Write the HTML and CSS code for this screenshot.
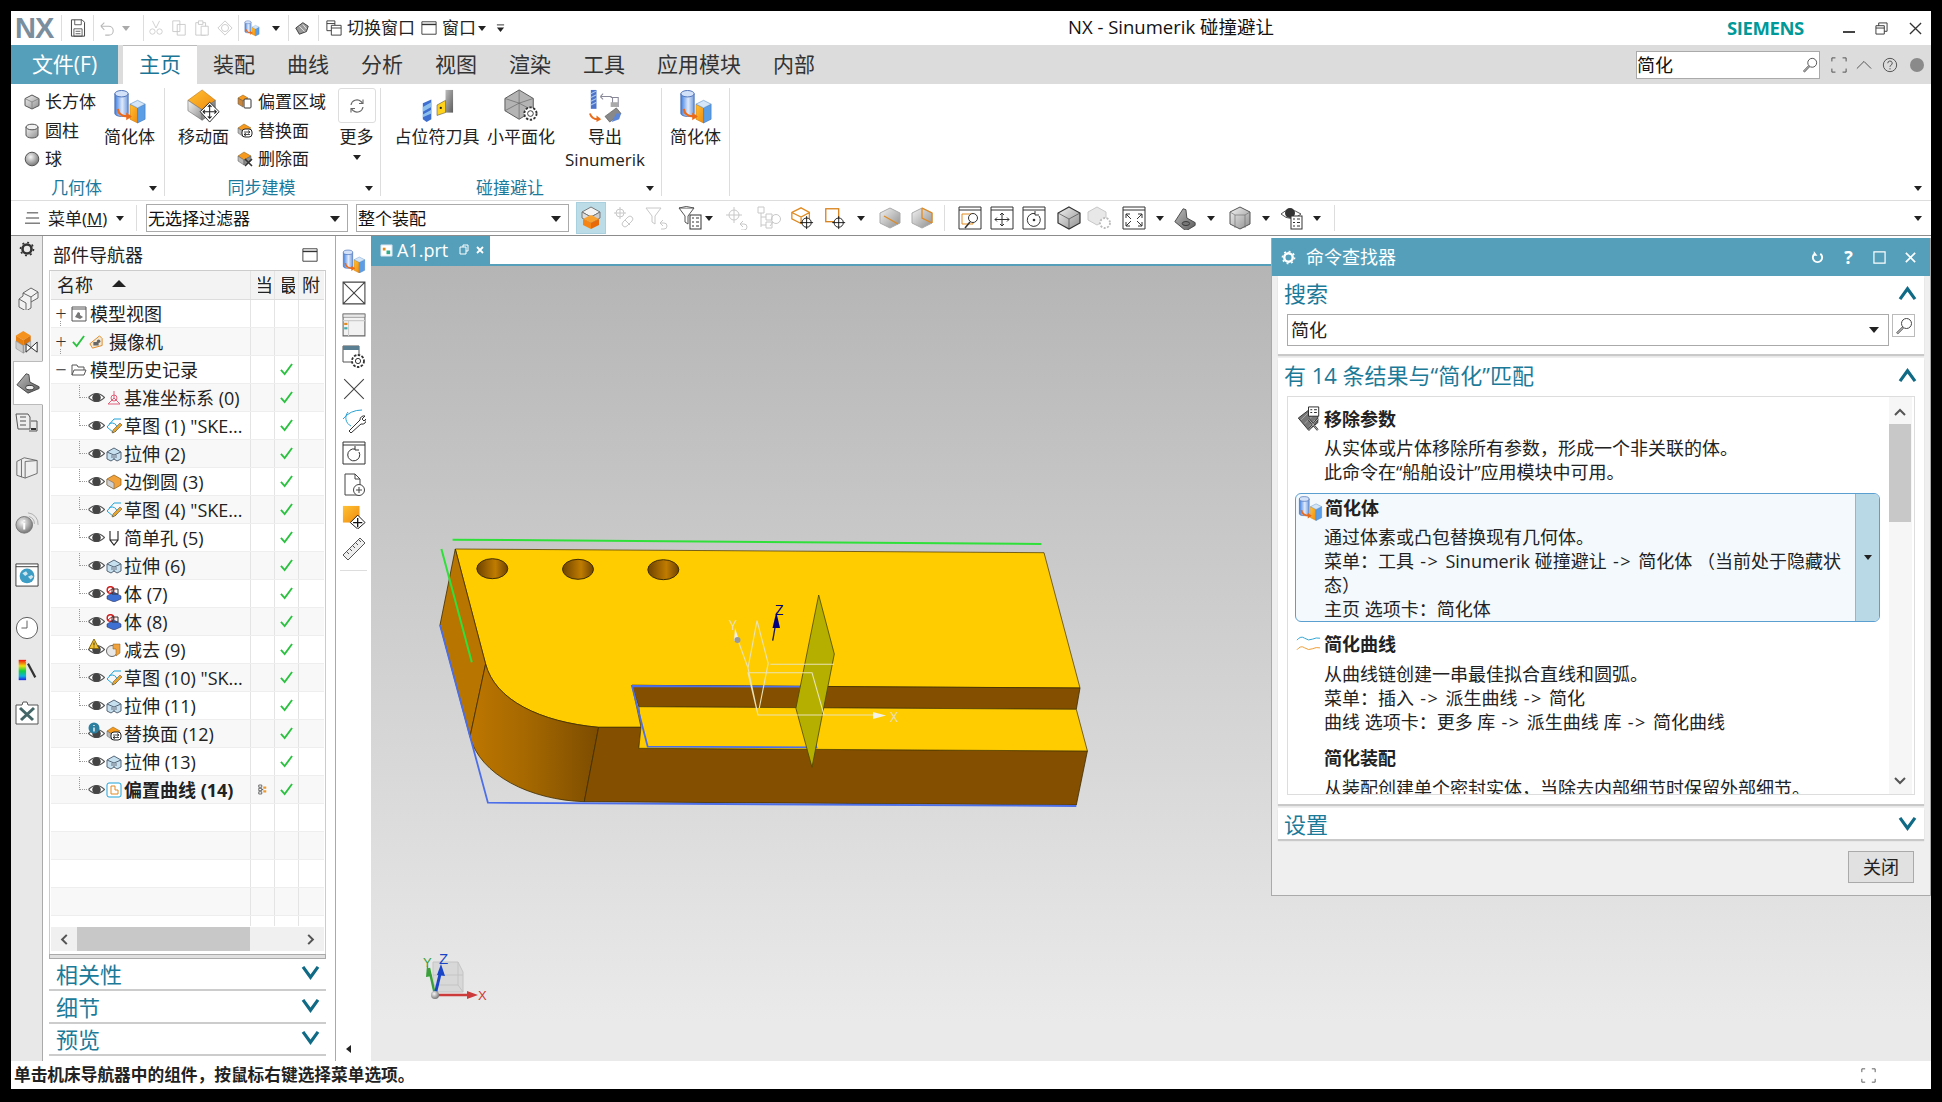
FILE: index.html
```html
<!DOCTYPE html>
<html lang="zh">
<head>
<meta charset="utf-8">
<title>NX - Sinumerik 碰撞避让</title>
<link rel="stylesheet" href="styles.css">
</head>
<body>
<svg class="sprite" xmlns="http://www.w3.org/2000/svg">
<defs>
<linearGradient id="gBlue" x1="0" x2="1" y1="0" y2="0"><stop offset="0" stop-color="#3f7fe0"/><stop offset=".55" stop-color="#dfeafb"/><stop offset="1" stop-color="#6f9be0"/></linearGradient>
<linearGradient id="gOrange" x1="0" x2="1" y1="0" y2="1"><stop offset="0" stop-color="#ffc233"/><stop offset="1" stop-color="#f08a10"/></linearGradient>
<linearGradient id="gGray" x1="0" x2="1" y1="0" y2="1"><stop offset="0" stop-color="#f4f4f4"/><stop offset="1" stop-color="#8e8e8e"/></linearGradient>
<linearGradient id="gDark" x1="0" x2="1" y1="0" y2="1"><stop offset="0" stop-color="#bdbdbd"/><stop offset="1" stop-color="#5c5c5c"/></linearGradient>
<radialGradient id="gBall" cx=".4" cy=".35" r=".7"><stop offset="0" stop-color="#f6f6f6"/><stop offset="1" stop-color="#707070"/></radialGradient>
<linearGradient id="gHole" x1="0" x2="1" y1="0" y2="0"><stop offset="0" stop-color="#6e4300"/><stop offset=".6" stop-color="#c07c00"/><stop offset="1" stop-color="#6e4300"/></linearGradient>
<linearGradient id="gRound" x1="0" x2="1" y1="0" y2="0"><stop offset="0" stop-color="#bd7600"/><stop offset=".45" stop-color="#a56800"/><stop offset="1" stop-color="#7c4c00"/></linearGradient>
<linearGradient id="gRainbow" x1="0" x2="0" y1="0" y2="1"><stop offset="0" stop-color="#f01010"/><stop offset=".3" stop-color="#f0e010"/><stop offset=".55" stop-color="#10d040"/><stop offset=".8" stop-color="#10b0e0"/><stop offset="1" stop-color="#2020e0"/></linearGradient>

<symbol id="simp" viewBox="0 0 36 36">
<path d="M2 5v21a7 3 0 0 0 14 0V5z" fill="url(#gBlue)" stroke="#4a6fb5"/>
<ellipse cx="9" cy="5" rx="7" ry="3.4" fill="#d3e2f8" stroke="#4a6fb5"/>
<path d="M18 16l8 4v16l-8-4z" fill="url(#gOrange)" stroke="#c87a10" stroke-width=".6"/>
<path d="M26 20l8-4v16l-8 4z" fill="#5b9ee6" stroke="#3a72b8" stroke-width=".6"/>
<path d="M18 16l8-4 8 4-8 4z" fill="#d4e6f7" stroke="#5b8fc8" stroke-width=".6"/>
<path d="M5 21q1 8 11 8" fill="none" stroke="#ea6a1a" stroke-width="2.4"/>
<path d="M14 25l6 4-6 4z" fill="#ea6a1a"/>
</symbol>
<symbol id="cube" viewBox="0 0 16 16"><path d="M8 1l7 3.6v7L8 15l-7-3.4v-7z" fill="url(#gGray)" stroke="#555"/><path d="M1 4.6L8 8l7-3.4M8 8v7" fill="none" stroke="#777" stroke-width=".7"/></symbol>
<symbol id="cyl" viewBox="0 0 16 16"><path d="M2 4v8a6 3 0 0 0 12 0V4z" fill="url(#gGray)" stroke="#555"/><ellipse cx="8" cy="4" rx="6" ry="2.8" fill="#f1f1f1" stroke="#555"/></symbol>
<symbol id="ball" viewBox="0 0 16 16"><circle cx="8" cy="8" r="6.8" fill="url(#gBall)" stroke="#555"/></symbol>
<symbol id="move" viewBox="0 0 36 36">
<path d="M1 12L16 1l14 11-14 10z" fill="url(#gOrange)" stroke="#c06f10" stroke-width=".6"/>
<path d="M1 12v11l15 10V22z" fill="url(#gGray)" stroke="#666" stroke-width=".6"/>
<path d="M30 12v11L16 33V22z" fill="url(#gDark)" stroke="#666" stroke-width=".6"/>
<path d="M24 14l10 10-10 11-10-11z" fill="#fff" stroke="#222"/>
<path d="M24 17v14M17 24h14M22 19l2-2 2 2M22 29l2 2 2-2M19 22l-2 2 2 2M29 22l2 2-2 2" fill="none" stroke="#222" stroke-width="1.1"/>
</symbol>
<symbol id="offset" viewBox="0 0 16 16"><path d="M1 4l5-3 5 3-5 3z" fill="#f59a1e" stroke="#8a5a10" stroke-width=".5"/><path d="M1 4v6l5 3V7z" fill="#c9863a" stroke="#555" stroke-width=".5"/><rect x="7" y="5" width="7" height="9" rx="1" fill="#fff" stroke="#333"/></symbol>
<symbol id="replace" viewBox="0 0 16 16"><path d="M1 5l6-4 7 4-7 4z" fill="#f59a1e" stroke="#8a5a10" stroke-width=".5"/><path d="M1 5v5l6 4V9z" fill="#bbb" stroke="#555" stroke-width=".5"/><rect x="5" y="6" width="10" height="8" rx="3" fill="#fff" stroke="#222"/><path d="M7 9h6M11 7.500l2 1.500-2 1.500M13 11.500H7M9 10l-2 1.500 2 1.500" fill="none" stroke="#222" stroke-width=".8"/></symbol>
<symbol id="delface" viewBox="0 0 16 16"><path d="M1 5l6-4 7 4-7 4z" fill="#f59a1e" stroke="#8a5a10" stroke-width=".5"/><path d="M1 5v5l6 4V9z" fill="#bbb" stroke="#555" stroke-width=".5"/><path d="M14 5v5l-7 4V9z" fill="#8d8d8d" stroke="#555" stroke-width=".5"/><path d="M8 8l7 7M15 8l-7 7" stroke="#333" stroke-width="1.6"/></symbol>
<symbol id="refresh" viewBox="0 0 18 18"><path d="M3 8a6 6 0 0 1 10-3.500l1.500 1.500M15 10a6 6 0 0 1-10 3.500L3.500 12" fill="none" stroke="#666" stroke-width="1.1"/><path d="M15 2.500V6.500h-4M3 15.500V11.500h4" fill="none" stroke="#666" stroke-width="1.1"/></symbol>
<symbol id="tool" viewBox="0 0 36 36">
<path d="M3 15l9-4v21l-5 3-4-3z" fill="#3d6ed0"/><path d="M3 19l9-5v5l-9 5zM3 27l9-5v4l-9 4z" fill="#8ec0ee"/>
<rect x="27" y="1" width="8" height="24" fill="url(#gDark)"/><path d="M18 17l9-5v13l-9 3z" fill="#ffd21c" stroke="#333" stroke-width=".5"/><circle cx="22" cy="20" r="1.2" fill="#222"/>
</symbol>
<symbol id="facet" viewBox="0 0 36 36">
<path d="M1 10L16 1l15 9v13l-15 9-15-9z" fill="#b4b4b4" stroke="#555"/><path d="M16 1v14L1 10M16 15l15-5M16 15v17M16 15L1 23M16 15l15 8" fill="none" stroke="#666" stroke-width=".7"/>
<circle cx="28" cy="26" r="6.500" fill="#fff" stroke="#333" stroke-width="2" stroke-dasharray="2.500 1.600"/><circle cx="28" cy="26" r="3" fill="#fff" stroke="#333"/>
</symbol>
<symbol id="export" viewBox="0 0 36 36">
<path d="M3 1h6v20H3z" fill="#4d73c9"/><path d="M3 5l6-3M3 9l6-3M3 13l6-3M3 17l6-3" stroke="#a9c8ef" stroke-width="1.1"/>
<path d="M13 8h12M13 8l3-3M13 8l3 3M24 9h8v10M26 9v10" fill="none" stroke="#889" stroke-width="1.1"/><rect x="24" y="14" width="8" height="5" fill="#aaa"/>
<path d="M18 29l12-9 5 6-12 9z" fill="#888" stroke="#444" stroke-width=".6"/><path d="M30 26l5 0-2 6-8 3z" fill="#5b86d8"/>
<path d="M2 26q2 6 8 6" fill="none" stroke="#ea6a1a" stroke-width="2"/><path d="M9 28l5 4-5 3z" fill="#ea6a1a"/>
</symbol>
<symbol id="save" viewBox="0 0 18 22"><path d="M1 1h13l3 3v17H1z" fill="#fff" stroke="#444" stroke-width="1.2"/><path d="M5 1v6h8V1M4 12h10v9H4zM6 15h6M6 18h6" fill="none" stroke="#444"/></symbol>
<symbol id="undo" viewBox="0 0 18 18"><path d="M2 7h9a5 5 0 0 1 0 10H7M2 7l4-4M2 7l4 4" fill="none" stroke="#b8b8b8" stroke-width="1.2"/></symbol>
<symbol id="cut" viewBox="0 0 18 18"><path d="M9 9L5 1M9 9l4-8" stroke="#ccc" fill="none"/><circle cx="5" cy="13" r="3" fill="none" stroke="#ccc"/><circle cx="13" cy="13" r="3" fill="none" stroke="#ccc"/></symbol>
<symbol id="copy" viewBox="0 0 18 18"><path d="M2 1h8v12H2zM7 5h9v12H7z" fill="#fff" stroke="#c8c8c8"/></symbol>
<symbol id="paste" viewBox="0 0 18 18"><path d="M2 3h11v14H2z" fill="#fff" stroke="#c8c8c8"/><path d="M5 1h5v4H5zM8 7h8v10H8z" fill="#fff" stroke="#c8c8c8"/></symbol>
<symbol id="wpoint" viewBox="0 0 18 18"><path d="M9 1l8 8-8 8-8-8z" fill="none" stroke="#c8c8c8"/><circle cx="9" cy="9" r="4" fill="none" stroke="#c8c8c8"/></symbol>
<symbol id="tag" viewBox="0 0 18 18"><path d="M2 9l8-6 6 4-2 6-8 3z" fill="#999" stroke="#333"/><path d="M6 7l6 6M10 5l4 5" stroke="#eee"/></symbol>
<symbol id="winswitch" viewBox="0 0 18 18"><path d="M1 1h9v11H1zM1 4h9" fill="#fff" stroke="#333"/><path d="M6 6h11v11H6zM6 9h11" fill="#fff" stroke="#333"/></symbol>
<symbol id="win" viewBox="0 0 18 18"><path d="M1 2h16v14H1z" fill="#fff" stroke="#333"/><path d="M1 5h16" stroke="#333" stroke-width="1.6"/></symbol>
<symbol id="qat" viewBox="0 0 10 10"><path d="M1 1h8" stroke="#222"/><path d="M1 4h8L5 9z" fill="#222"/></symbol>
<symbol id="lens" viewBox="0 0 18 18"><circle cx="11.500" cy="6.500" r="5" fill="#fff" stroke="#444"/><path d="M8 10.500L2 16.500" stroke="#444" stroke-width="2.400"/><path d="M8 10.500L2 16.500" stroke="#fff"/></symbol>
<symbol id="focus" viewBox="0 0 18 18"><path d="M1 5V1h4M13 1h4v4M1 13v4h4M13 17h4v-4" fill="none" stroke="#444"/></symbol>
<symbol id="up" viewBox="0 0 18 10"><path d="M1 9l8-8 8 8" fill="none" stroke="#444"/></symbol>
<symbol id="help" viewBox="0 0 18 18"><circle cx="9" cy="9" r="7.500" fill="none" stroke="#444"/><path d="M6.500 7a2.500 2.500 0 1 1 3.500 2.300c-.8.400-1 .8-1 1.700M9 12.500v1.500" fill="none" stroke="#444"/></symbol>
<symbol id="chev-d" viewBox="0 0 20 16"><path d="M2 2l8 11 8-11" fill="none" stroke="#0f6a86" stroke-width="3.400"/></symbol>
<symbol id="chev-u" viewBox="0 0 20 16"><path d="M2 14L10 3l8 11" fill="none" stroke="#0f6a86" stroke-width="3.400"/></symbol>
<symbol id="menu3" viewBox="0 0 16 14"><path d="M2 1.500h12M1 7h14M0 12.500h16" stroke="#333"/></symbol>
<symbol id="gear" viewBox="0 0 16 16"><circle cx="8" cy="8" r="4.500" fill="none" stroke="currentColor" stroke-width="2.600"/><circle cx="8" cy="8" r="6.500" fill="none" stroke="currentColor" stroke-width="1.600" stroke-dasharray="2 3"/></symbol>

<symbol id="t-selbody" viewBox="0 0 24 24"><path d="M12 1l9 5-9 5-9-5z" fill="#f4f4f4" stroke="#777"/><path d="M3 6v6l9 5V11z" fill="#ddd" stroke="#777"/><path d="M21 6v6l-9 5V11z" fill="#ccc" stroke="#777"/><path d="M4 13l8-4 8 4-8 4z" fill="#f8a030"/><path d="M4 13v6l8 4v-6z" fill="#f58414"/><path d="M20 13v6l-8 4v-6z" fill="#e86a08"/></symbol>
<symbol id="t-pin" viewBox="0 0 24 24"><g fill="none" stroke="#c8c8c8"><circle cx="8" cy="7" r="4"/><path d="M8 1v12M2 7h12"/><path d="M11 16l5-5a2.500 2.500 0 0 1 4 4l-5 5a2.500 2.500 0 0 1-4-4zM13 14l5 5"/></g></symbol>
<symbol id="t-funback" viewBox="0 0 24 24"><g fill="none" stroke="#c8c8c8"><path d="M1 2h15l-6 8v8l-3-2v-6z"/><path d="M15 17h4a3 3 0 0 1 0 6h-3M15 17l3-3M15 17l3 3"/></g></symbol>
<symbol id="t-funlist" viewBox="0 0 24 24"><path d="M1 2h15l-6 8v8l-3-2v-6z" fill="#fff" stroke="#555"/><path d="M1 2q7-3 15 0" fill="#ddd" stroke="#555"/><rect x="12" y="9" width="11" height="14" fill="#fff" stroke="#333"/><path d="M14 12h2M18 12h3M14 16h2M18 16h3M14 20h2M18 20h3" stroke="#333"/></symbol>
<symbol id="t-ptback" viewBox="0 0 24 24"><g fill="none" stroke="#c8c8c8"><circle cx="9" cy="9" r="5"/><path d="M9 1v16M1 9h16M15 18h4a3 3 0 0 1 0 6h-3M15 18l3-3M15 18l3 3"/></g></symbol>
<symbol id="t-tree" viewBox="0 0 24 24"><g fill="none" stroke="#c8c8c8"><path d="M1 1h6v6H1zM4 7v14M4 11h5M4 19h5M9 8h6v6H9zM9 16h6v6H9z"/><circle cx="19" cy="13" r="4.500"/><path d="M16 16l-3 4"/></g></symbol>
<symbol id="t-cubept" viewBox="0 0 26 24"><path d="M12 1l9 5v7l-9 5-10-5V6zM2 6l10 5 9-5M12 11v7" fill="none" stroke="#e08a20" stroke-width="1.400"/><circle cx="18" cy="17" r="5" fill="#fff" stroke="#111"/><path d="M18 10v14M11 17h14" stroke="#111"/></symbol>
<symbol id="t-sqpt" viewBox="0 0 26 24"><rect x="3" y="2" width="14" height="14" fill="none" stroke="#d9801a" stroke-width="1.400"/><circle cx="17" cy="17" r="5" fill="#fff" stroke="#111"/><path d="M17 10v14M10 17h14" stroke="#111"/></symbol>
<symbol id="t-cubeedge" viewBox="0 0 24 24"><path d="M12 2l10 5v10l-10 5-10-5V7z" fill="url(#gGray)" stroke="#aaa"/><path d="M6 10l14 8" stroke="#e08a20" stroke-width="1.300"/></symbol>
<symbol id="t-cubeface" viewBox="0 0 24 24"><path d="M12 2l10 5v10l-10 5-10-5V7z" fill="url(#gGray)" stroke="#aaa"/><path d="M12 2l10 5v10M12 2v10l10 5" fill="none" stroke="#e08a20" stroke-width="1.300"/></symbol>
<symbol id="t-viewzoom" viewBox="0 0 24 24"><path d="M1 1h22v22H1zM1 4h22" fill="#fff" stroke="#333"/><path d="M4 8h11v10H4z" fill="#fff" stroke="#e08a20"/><circle cx="15" cy="12" r="4.500" fill="#fff" stroke="#333"/><path d="M12 16l-5 6" stroke="#333" stroke-width="1.500"/></symbol>
<symbol id="t-viewpan" viewBox="0 0 24 24"><path d="M1 1h22v22H1zM1 4h22" fill="#fff" stroke="#333"/><path d="M12 7v13M5 13.500h14M10 9l2-2 2 2M10 18l2 2 2-2M7 11.500l-2 2 2 2M17 11.500l2 2-2 2" fill="none" stroke="#333"/></symbol>
<symbol id="t-viewrot" viewBox="0 0 24 24"><path d="M1 1h22v22H1zM1 4h22" fill="#fff" stroke="#333"/><path d="M17 10a6.500 6.500 0 1 1-4-2.500M13 5v4h4" fill="none" stroke="#333"/><circle cx="12" cy="14" r="1.300" fill="#333"/></symbol>
<symbol id="t-shade" viewBox="0 0 24 24"><path d="M12 1l11 6v10l-11 6-11-6V7z" fill="url(#gGray)" stroke="#333" stroke-width="1.200"/><path d="M1 7l11 6 11-6M12 13v10" fill="none" stroke="#333" stroke-width=".6"/></symbol>
<symbol id="t-shadeg" viewBox="0 0 24 24"><path d="M10 1l9 5v8l-9 5-9-5V6z" fill="#e8e8e8" stroke="#c8c8c8"/><circle cx="18" cy="17" r="5" fill="#fff" stroke="#bbb" stroke-width="1.800" stroke-dasharray="2 1.500"/></symbol>
<symbol id="t-fit" viewBox="0 0 24 24"><path d="M1 1h22v22H1zM1 4h22" fill="#fff" stroke="#333"/><path d="M4 8l5 5M4 8h4M4 8v4M20 8l-5 5M20 8h-4M20 8v4M4 20l5-5M4 20h4M4 20v-4M20 20l-5-5M20 20h-4M20 20v-4" fill="none" stroke="#333"/></symbol>
<symbol id="t-part" viewBox="0 0 26 24"><path d="M2 16l9-14 3 1 1 9 9 5v3l-10 6z" fill="url(#gDark)" stroke="#444"/><ellipse cx="14" cy="18" rx="4" ry="2.200" fill="#777" stroke="#333"/></symbol>
<symbol id="t-hex" viewBox="0 0 24 24"><path d="M12 1l10 5v12l-10 5-10-5V6z" fill="url(#gGray)" stroke="#555"/><path d="M2 6l5 3h10l5-3M7 9v13M17 9v13" fill="none" stroke="#666" stroke-width=".6"/></symbol>
<symbol id="t-eyelist" viewBox="0 0 24 24"><path d="M1 8q8-8 20 0q-10 9-20 0z" fill="#fff" stroke="#555"/><circle cx="10" cy="7" r="5" fill="#333"/><rect x="11" y="10" width="11" height="13" fill="#fff" stroke="#333"/><path d="M13 13h2M17 13h3M13 16.500h2M17 16.500h3M13 20h2M17 20h3" stroke="#333"/></symbol>

<symbol id="eye" viewBox="0 0 16 12"><path d="M0.500 6q7.500-7.500 15 0q-7.500 7.500-15 0z" fill="#fff" stroke="#555"/><circle cx="8" cy="6" r="4" fill="#444"/></symbol>
<symbol id="check" viewBox="0 0 16 14"><path d="M2 7.500l4 4.500 8-11" fill="none" stroke="#29c23e" stroke-width="2"/></symbol>
<symbol id="datum" viewBox="0 0 16 16"><g fill="none" stroke="#e0607a"><path d="M8 8V1M8 8l-6 6M8 8l6 6"/><circle cx="8" cy="8" r="3"/><path d="M2 14h12"/></g></symbol>
<symbol id="sketch" viewBox="0 0 16 16"><g fill="none" stroke="#1ea3d8"><path d="M1 9L8 1h7M1 9l7 6M3 6a5 5 0 0 1 6 8"/></g><path d="M6 15l1-3 7-7 2 2-7 7z" fill="#e6a52a" stroke="#444" stroke-width=".5"/></symbol>
<symbol id="extrude" viewBox="0 0 16 16"><path d="M1 6l7-4 7 4v7l-4 2-3-2-3 2-4-2z" fill="#c6e0f0" stroke="#567"/><path d="M1 6l7 3 7-3M8 9v4" fill="none" stroke="#567"/><path d="M5 9h6v3H5z" fill="#9aa9b8"/></symbol>
<symbol id="blend" viewBox="0 0 16 16"><path d="M1 5l7-4 7 4v6l-7 4-7-4z" fill="#f2a23a" stroke="#8a5a10" stroke-width=".7"/><path d="M1 5l7 4v6l-7-4z" fill="#d0d0d0" stroke="#666" stroke-width=".6"/></symbol>
<symbol id="hole" viewBox="0 0 16 16"><path d="M4 1v9l4 5 4-5V1M4 10h8" fill="none" stroke="#222" stroke-width="1.100"/></symbol>
<symbol id="body" viewBox="0 0 16 16"><circle cx="4.500" cy="4" r="3.300" fill="#fff" stroke="#d02020" stroke-width="1.500"/><path d="M2 6l5-4" stroke="#d02020"/><path d="M1 10l7-4 7 4v3l-7 3-7-3z" fill="#3e6fd2" stroke="#224" stroke-width=".5"/><path d="M6 3h6v5H6z" fill="none" stroke="#333"/></symbol>
<symbol id="warn" viewBox="0 0 12 12"><path d="M6 1l5 9.500H1z" fill="#f2c230" stroke="#8a6a10"/><path d="M6 4.500v3M6 8.500v1" stroke="#333"/></symbol>
<symbol id="info" viewBox="0 0 12 12"><circle cx="6" cy="6" r="5.500" fill="#2c7f9e"/><path d="M6 3v1M6 5.500v4" stroke="#fff" stroke-width="1.300"/></symbol>
<symbol id="subtract" viewBox="0 0 16 16"><circle cx="6" cy="9" r="5.500" fill="#e8e8e8" stroke="#666"/><path d="M7 2h7v9l-4 3V7H7z" fill="#f0a23e" stroke="#8a5a10" stroke-width=".5"/></symbol>
<symbol id="offcurve" viewBox="0 0 16 16"><rect x="1" y="1" width="14" height="14" rx="2" fill="#fff" stroke="#1ea3d8"/><path d="M5 4h4v4h3v4H5z" fill="none" stroke="#e08a20"/></symbol>
<symbol id="camera" viewBox="0 0 16 16"><path d="M1 10L12 1l3 3v8L4 15z" fill="#f5e8d0" stroke="#d9801a"/><path d="M5 8h6v4H5z" fill="#666"/><circle cx="11" cy="7" r="2" fill="#666"/></symbol>
<symbol id="mview" viewBox="0 0 16 16"><path d="M1 1h14v14H1zM1 3h14" fill="#fff" stroke="#555"/><path d="M4 11l3-5 2 1v2l3 2-3 2z" fill="#777"/></symbol>
<symbol id="folder" viewBox="0 0 16 14"><path d="M1 12V2h5l1 2h6v3M1 12l2-5h12l-2 5z" fill="#fff" stroke="#555"/></symbol>
<symbol id="blockview" viewBox="0 0 12 14"><path d="M1 1h4v3H1zM1 5.500h4v3H1zM1 10h4v3H1zM5 7h2" fill="#fff" stroke="#444"/><path d="M7 3h4v3H7zM7 8h4v3H7z" fill="#ef9a2e"/></symbol>

<symbol id="r-settings" viewBox="0 0 20 20"><g color="#333"><use href="#gear" width="16" height="16" x="2" y="2"/></g></symbol>
<symbol id="r-asm" viewBox="0 0 24 24"><path d="M8 7l8-5 7 4v6l-7 4v6l-5 3-7-4v-8l4-3z" fill="#f2f2f2" stroke="#666"/><path d="M8 7l8 4 7-5M16 11v5M4 13l7 4v8" fill="none" stroke="#666"/></symbol>
<symbol id="r-con" viewBox="0 0 26 26"><path d="M1 6l8-5 8 5-8 5z" fill="#f5921e"/><path d="M1 6v6l8 5v-6z" fill="#e88010"/><path d="M17 6v6l-8 5v-6z" fill="#d97208"/><path d="M1 12v8l8 5v-8zM9 17l8-5v8l-8 5z" fill="#ccc" stroke="#777" stroke-width=".5"/><path d="M12 15l12 9V13L12 24z" fill="#fff" stroke="#222"/></symbol>
<symbol id="r-part" viewBox="0 0 26 24"><path d="M1 14L11 2l3 1 1 8 10 5v2l-12 5z" fill="url(#gDark)" stroke="#444"/><ellipse cx="15" cy="17" rx="4.500" ry="2.400" fill="#eee" stroke="#333"/></symbol>
<symbol id="r-lib" viewBox="0 0 24 24"><path d="M1 3h12l2 3v12H3z" fill="#eee" stroke="#555"/><path d="M5 6h6M5 10h6M5 14h6" stroke="#555"/><path d="M16 10h6v10h-8" fill="none" stroke="#555"/><path d="M16 18h5" stroke="#333" stroke-width="2"/></symbol>
<symbol id="r-book" viewBox="0 0 24 26"><path d="M1 7l8-4 14 3v14l-13 5-9-3z" fill="#eee" stroke="#666"/><path d="M6 5v19M10 7v18M10 7l13-1" fill="none" stroke="#666"/></symbol>
<symbol id="r-info" viewBox="0 0 26 26"><circle cx="10" cy="15" r="9" fill="url(#gBall)" stroke="#777"/><path d="M10 10v1M10 13v7" stroke="#fff" stroke-width="2.200"/><path d="M14 2a12 12 0 0 1 11 13M15 6a8 8 0 0 1 6 8" fill="none" stroke="#aaa"/></symbol>
<symbol id="r-globe" viewBox="0 0 26 26"><path d="M1 1h24v24H1zM1 4h24" fill="#fff" stroke="#333"/><circle cx="13" cy="14" r="8" fill="#3d9dc4"/><path d="M8 11l4-2 2 3-3 2zM14 15l4-2 2 2-3 3z" fill="#cfe6ef"/></symbol>
<symbol id="r-clock" viewBox="0 0 26 26"><circle cx="13" cy="13" r="11.500" fill="#fff" stroke="#555"/><path d="M13 5v8H7" fill="none" stroke="#555"/></symbol>
<symbol id="r-color" viewBox="0 0 24 26"><rect x="3" y="2" width="8" height="22" fill="url(#gRainbow)"/><path d="M13 6l8 15" stroke="#333" stroke-width="2.400"/><path d="M13 6l-2-3" stroke="#ddd" stroke-width="2"/></symbol>
<symbol id="r-tools" viewBox="0 0 24 24"><path d="M1 4h6l1-3h4l1 3h10v19H1z" fill="#fff" stroke="#555"/><path d="M5 7l13 12M19 7L6 19" stroke="#466" stroke-width="3"/></symbol>

<symbol id="s-x" viewBox="0 0 22 22"><path d="M1 1h20v20H1zM1 1l20 20M21 1L1 21" fill="#fff" stroke="#444"/></symbol>
<symbol id="s-win" viewBox="0 0 22 22"><path d="M1 1h20v20H1z" fill="#f2f2f2" stroke="#666"/><path d="M1 1h20v3H1z" fill="#e8e8e8" stroke="#666" stroke-width=".5"/><path d="M1 7h20M6 7v14" stroke="#ccc"/><path d="M2 9h3v2H2z" fill="#e08a20"/><path d="M2 13h3v2H2z" fill="#4aa"/></symbol>
<symbol id="s-wingear" viewBox="0 0 24 24"><path d="M1 1h16v16H1z" fill="#fff" stroke="#555"/><path d="M1 1h16v4H1z" fill="#5a7f92"/><circle cx="16" cy="16" r="6" fill="#fff" stroke="#333" stroke-width="1.800" stroke-dasharray="2.500 1.400"/><circle cx="16" cy="16" r="2.600" fill="#fff" stroke="#333"/></symbol>
<symbol id="s-cross" viewBox="0 0 22 22"><path d="M2 2l18 18M20 2L2 20" stroke="#444"/></symbol>
<symbol id="s-wrench" viewBox="0 0 24 24"><path d="M1 10Q8 1 20 1M6 3a9 9 0 0 0 3 14" fill="none" stroke="#2aa3d3"/><path d="M7 22l11-11a4 4 0 0 1 5-4l-3 3 2 2 2-2a4 4 0 0 1-5 5L9 24z" fill="#fff" stroke="#333"/></symbol>
<symbol id="s-winrot" viewBox="0 0 24 24"><path d="M1 1h22v22H1zM1 4h22" fill="#fff" stroke="#333"/><path d="M17 11a6 6 0 1 1-4-3M13 5v4h4" fill="none" stroke="#333"/></symbol>
<symbol id="s-doc" viewBox="0 0 24 24"><path d="M3 1h10l5 5v16H3zM13 1v5h5" fill="#fff" stroke="#444"/><circle cx="17" cy="17" r="5.500" fill="#fff" stroke="#444"/><path d="M17 14v6M14 17h6" stroke="#444"/></symbol>
<symbol id="s-orange" viewBox="0 0 26 26"><rect x="1" y="1" width="18" height="18" fill="url(#gOrange)"/><path d="M17 11l8 8-8 7-8-7z" fill="#fff" stroke="#111"/><path d="M17 14v10M12 19h10" stroke="#111" stroke-width="1.400"/></symbol>
<symbol id="s-ruler" viewBox="0 0 24 24"><path d="M1 18L18 1l5 5L6 23z" fill="#eee" stroke="#555"/><path d="M5 15l2 2M8 12l2 2M11 9l2 2M14 6l2 2M17 3l2 2" stroke="#555"/></symbol>

<symbol id="d-remove" viewBox="0 0 26 28"><path d="M2 13L15 3l8 6v9l-10 8z" fill="#777" stroke="#333"/><path d="M5 15l7-7M9 19l8-8M14 22l6-7" stroke="#aaa"/><path d="M13 1h11v10H13z" fill="#fff" stroke="#222"/><path d="M15 4h2M19 4h3M15 7h2M19 7h3" stroke="#222"/><path d="M13 14l10 12M23 14L13 26" stroke="#333" stroke-width="2.200"/><path d="M13 14l10 12M23 14L13 26" stroke="#fff" stroke-width=".7"/></symbol>
<symbol id="d-curve" viewBox="0 0 26 20"><path d="M1 6q4-5 8-2t8 1 8-1" fill="none" stroke="#2aa3d3"/><path d="M1 16q4-5 8-2t8 1 8-1" fill="none" stroke="#ef9a2e"/></symbol>
</defs>
</svg>

<div class="window">
  <header class="titlebar">
    <div class="qat">
      <span class="logo">NX</span>
      <i class="vsep sp-logo"></i>
      <svg class="q16 q-save"><use href="#save"/></svg>
      <i class="vsep"></i>
      <svg class="q16"><use href="#undo"/></svg>
      <i class="caret caret-g"></i>
      <i class="vsep sp-undo"></i>
      <svg class="q16 q-tight"><use href="#cut"/></svg>
      <svg class="q16 q-tight"><use href="#copy"/></svg>
      <svg class="q16 q-tight"><use href="#paste"/></svg>
      <svg class="q16 q-end"><use href="#wpoint"/></svg>
      <i class="vsep"></i>
      <svg class="q16 q-wide"><use href="#simp"/></svg>
      <i class="caret caret-n"></i>
      <i class="vsep"></i>
      <svg class="q16"><use href="#tag"/></svg>
      <i class="vsep sp-tag"></i>
      <svg class="q16"><use href="#winswitch"/></svg>
      <span class="qtext">切换窗口</span>
      <svg class="q16"><use href="#win"/></svg>
      <span class="qtext qtext-end">窗口</span>
      <i class="caret caret-n"></i>
      <svg class="q10"><use href="#qat"/></svg>
    </div>
    <div class="apptitle">NX - Sinumerik 碰撞避让</div>
    <div class="brand">SIEMENS</div>
    <div class="winbtns">
      <span class="wb-min"></span>
      <svg class="wb" viewBox="0 0 14 14"><path d="M1 4h9v9H1zM4 4V1h9v9h-3M1 6.500h9" fill="#fff" stroke="#333"/></svg>
      <svg class="wb" viewBox="0 0 14 14"><path d="M1 1l12 12M13 1L1 13" stroke="#333" stroke-width="1.400"/></svg>
    </div>
  </header>

  <nav class="tabs">
    <div class="tab-file">文件(F)</div>
    <div class="tab tab-on">主页</div>
    <div class="tab">装配</div>
    <div class="tab">曲线</div>
    <div class="tab">分析</div>
    <div class="tab">视图</div>
    <div class="tab">渲染</div>
    <div class="tab">工具</div>
    <div class="tab">应用模块</div>
    <div class="tab">内部</div>
    <div class="tabs-right">
      <div class="cmdsearch"><span>简化</span><svg class="i16"><use href="#lens"/></svg></div>
      <svg class="i16 tr-1"><use href="#focus"/></svg>
      <svg class="i16 tr-2"><use href="#up"/></svg>
      <svg class="i16 tr-3"><use href="#help"/></svg>
      <i class="dot"></i>
    </div>
  </nav>

  <section class="ribbon">
    <div class="group g1">
      <div class="g-body">
        <div class="smalls s1">
          <div class="small"><svg class="i16"><use href="#cube"/></svg>长方体</div>
          <div class="small"><svg class="i16"><use href="#cyl"/></svg>圆柱</div>
          <div class="small"><svg class="i16"><use href="#ball"/></svg>球</div>
        </div>
        <div class="big w70"><svg class="i36"><use href="#simp"/></svg><span>简化体</span></div>
      </div>
      <div class="g-label"><span>几何体</span><b><i class="caret"></i></b></div>
    </div>
    <div class="group g2">
      <div class="g-body">
        <div class="big w70"><svg class="i36"><use href="#move"/></svg><span>移动面</span></div>
        <div class="smalls s2">
          <div class="small"><svg class="i16"><use href="#offset"/></svg>偏置区域</div>
          <div class="small"><svg class="i16"><use href="#replace"/></svg>替换面</div>
          <div class="small"><svg class="i16"><use href="#delface"/></svg>删除面</div>
        </div>
        <div class="more">
          <div class="more-box"><svg class="i18"><use href="#refresh"/></svg></div>
          <span>更多</span>
          <i class="caret"></i>
        </div>
      </div>
      <div class="g-label"><span>同步建模</span><b><i class="caret"></i></b></div>
    </div>
    <div class="group g3">
      <div class="g-body">
        <div class="big w84"><svg class="i36"><use href="#tool"/></svg><span>占位符刀具</span></div>
        <div class="big w84"><svg class="i36"><use href="#facet"/></svg><span>小平面化</span></div>
        <div class="big w84"><svg class="i36"><use href="#export"/></svg><span>导出</span><span>Sinumerik</span></div>
      </div>
      <div class="g-label"><span>碰撞避让</span><b><i class="caret"></i></b></div>
    </div>
    <div class="group g4">
      <div class="g-body">
        <div class="big w68"><svg class="i36"><use href="#simp"/></svg><span>简化体</span></div>
      </div>
    </div>
    <div class="rib-end"><i class="caret"></i></div>
  </section>

  <section class="toolbar">
    <svg class="menu-ic"><use href="#menu3"/></svg>
    <span class="menu-t">菜单(<u>M</u>)</span>
    <i class="caret mr12"></i>
    <i class="tsep mr9"></i>
    <div class="sel sel-a"><span>无选择过滤器</span><i class="caret"></i></div>
    <div class="sel sel-b"><span>整个装配</span><i class="caret"></i></div>
    <div class="ti-sel"><svg class="ti"><use href="#t-selbody"/></svg></div>
    <svg class="ti mr9"><use href="#t-pin"/></svg>
    <svg class="ti mr9"><use href="#t-funback"/></svg>
    <svg class="ti mr3"><use href="#t-funlist"/></svg>
    <i class="caret mr12"></i>
    <svg class="ti mr8"><use href="#t-ptback"/></svg>
    <svg class="ti mr9"><use href="#t-tree"/></svg>
    <svg class="ti mr9"><use href="#t-cubept"/></svg>
    <svg class="ti mr10"><use href="#t-sqpt"/></svg>
    <i class="caret mr13"></i>
    <svg class="ti mr8"><use href="#t-cubeedge"/></svg>
    <svg class="ti mr10"><use href="#t-cubeface"/></svg>
    <i class="tsep mr13"></i>
    <svg class="ti mr8"><use href="#t-viewzoom"/></svg>
    <svg class="ti mr8"><use href="#t-viewpan"/></svg>
    <svg class="ti mr11"><use href="#t-viewrot"/></svg>
    <svg class="ti mr6"><use href="#t-shade"/></svg>
    <svg class="ti mr11"><use href="#t-shadeg"/></svg>
    <svg class="ti mr10"><use href="#t-fit"/></svg>
    <i class="caret mr9"></i>
    <svg class="ti mr10"><use href="#t-part"/></svg>
    <i class="caret mr13"></i>
    <svg class="ti mr10"><use href="#t-hex"/></svg>
    <i class="caret mr10"></i>
    <svg class="ti mr9"><use href="#t-eyelist"/></svg>
    <i class="caret mr13"></i>
    <i class="tsep"></i>
    <div class="rib-end"><i class="caret"></i></div>
  </section>

  <main class="main">
    <aside class="rail">
      <div class="rail-i ri-gear"><svg class="i20"><use href="#r-settings"/></svg></div>
      <div class="rail-i m20"><svg class="i24"><use href="#r-asm"/></svg></div>
      <div class="rail-i m12"><svg class="i24"><use href="#r-con"/></svg></div>
      <div class="rail-i rail-on"><svg class="i24"><use href="#r-part"/></svg></div>
      <div class="rail-i m2"><svg class="i24"><use href="#r-lib"/></svg></div>
      <div class="rail-i m12"><svg class="i24"><use href="#r-book"/></svg></div>
      <div class="rail-i m24"><svg class="i24"><use href="#r-info"/></svg></div>
      <div class="rail-i m20"><svg class="i24"><use href="#r-globe"/></svg></div>
      <div class="rail-i m21"><svg class="i24"><use href="#r-clock"/></svg></div>
      <div class="rail-i m10"><svg class="i24"><use href="#r-color"/></svg></div>
      <div class="rail-i m11"><svg class="i24"><use href="#r-tools"/></svg></div>
    </aside>

    <aside class="nav">
      <div class="nav-head"><span>部件导航器</span><svg class="i16"><use href="#win"/></svg></div>
      <div class="grid">
        <div class="g-head">
          <div class="c-name">名称<i class="sort"></i></div>
          <div class="c"><span class="clip">当</span></div><div class="c"><span class="clip">最</span></div><div class="c c-last">附</div>
        </div>
        <div class="g-rows">
          <div class="row"><div class="c-name top dotdown"><i class="box">+</i><svg class="i16"><use href="#mview"/></svg>模型视图</div><div class="c"></div><div class="c"></div><div class="c"></div></div>
          <div class="row alt"><div class="c-name top dotdown"><i class="box">+</i><svg class="chk"><use href="#check"/></svg><svg class="i16 nar"><use href="#camera"/></svg>摄像机</div><div class="c"></div><div class="c"></div><div class="c"></div></div>
          <div class="row"><div class="c-name top"><i class="box">−</i><svg class="i16"><use href="#folder"/></svg>模型历史记录</div><div class="c"></div><div class="c"><svg class="chk"><use href="#check"/></svg></div><div class="c"></div></div>
          <div class="row alt"><div class="c-name child"><svg class="i16 eye"><use href="#eye"/></svg><svg class="i16"><use href="#datum"/></svg><span class="t">基准坐标系 (0)</span></div><div class="c"></div><div class="c"><svg class="chk"><use href="#check"/></svg></div><div class="c"></div></div>
          <div class="row"><div class="c-name child"><svg class="i16 eye"><use href="#eye"/></svg><svg class="i16"><use href="#sketch"/></svg><span class="t">草图 (1) "SKE...</span></div><div class="c"></div><div class="c"><svg class="chk"><use href="#check"/></svg></div><div class="c"></div></div>
          <div class="row alt"><div class="c-name child"><svg class="i16 eye"><use href="#eye"/></svg><svg class="i16"><use href="#extrude"/></svg><span class="t">拉伸 (2)</span></div><div class="c"></div><div class="c"><svg class="chk"><use href="#check"/></svg></div><div class="c"></div></div>
          <div class="row"><div class="c-name child"><svg class="i16 eye"><use href="#eye"/></svg><svg class="i16"><use href="#blend"/></svg><span class="t">边倒圆 (3)</span></div><div class="c"></div><div class="c"><svg class="chk"><use href="#check"/></svg></div><div class="c"></div></div>
          <div class="row alt"><div class="c-name child"><svg class="i16 eye"><use href="#eye"/></svg><svg class="i16"><use href="#sketch"/></svg><span class="t">草图 (4) "SKE...</span></div><div class="c"></div><div class="c"><svg class="chk"><use href="#check"/></svg></div><div class="c"></div></div>
          <div class="row"><div class="c-name child"><svg class="i16 eye"><use href="#eye"/></svg><svg class="i16"><use href="#hole"/></svg><span class="t">简单孔 (5)</span></div><div class="c"></div><div class="c"><svg class="chk"><use href="#check"/></svg></div><div class="c"></div></div>
          <div class="row alt"><div class="c-name child"><svg class="i16 eye"><use href="#eye"/></svg><svg class="i16"><use href="#extrude"/></svg><span class="t">拉伸 (6)</span></div><div class="c"></div><div class="c"><svg class="chk"><use href="#check"/></svg></div><div class="c"></div></div>
          <div class="row"><div class="c-name child"><svg class="i16 eye"><use href="#eye"/></svg><svg class="i16"><use href="#body"/></svg><span class="t">体 (7)</span></div><div class="c"></div><div class="c"><svg class="chk"><use href="#check"/></svg></div><div class="c"></div></div>
          <div class="row alt"><div class="c-name child"><svg class="i16 eye"><use href="#eye"/></svg><svg class="i16"><use href="#body"/></svg><span class="t">体 (8)</span></div><div class="c"></div><div class="c"><svg class="chk"><use href="#check"/></svg></div><div class="c"></div></div>
          <div class="row"><div class="c-name child"><span class="stack"><svg class="i16 eye"><use href="#eye"/></svg><svg class="badge"><use href="#warn"/></svg></span><svg class="i16"><use href="#subtract"/></svg><span class="t">减去 (9)</span></div><div class="c"></div><div class="c"><svg class="chk"><use href="#check"/></svg></div><div class="c"></div></div>
          <div class="row alt"><div class="c-name child"><svg class="i16 eye"><use href="#eye"/></svg><svg class="i16"><use href="#sketch"/></svg><span class="t">草图 (10) "SK...</span></div><div class="c"></div><div class="c"><svg class="chk"><use href="#check"/></svg></div><div class="c"></div></div>
          <div class="row"><div class="c-name child"><svg class="i16 eye"><use href="#eye"/></svg><svg class="i16"><use href="#extrude"/></svg><span class="t">拉伸 (11)</span></div><div class="c"></div><div class="c"><svg class="chk"><use href="#check"/></svg></div><div class="c"></div></div>
          <div class="row alt"><div class="c-name child"><span class="stack"><svg class="i16 eye"><use href="#eye"/></svg><svg class="badge"><use href="#info"/></svg></span><svg class="i16"><use href="#replace"/></svg><span class="t">替换面 (12)</span></div><div class="c"></div><div class="c"><svg class="chk"><use href="#check"/></svg></div><div class="c"></div></div>
          <div class="row"><div class="c-name child"><svg class="i16 eye"><use href="#eye"/></svg><svg class="i16"><use href="#extrude"/></svg><span class="t">拉伸 (13)</span></div><div class="c"></div><div class="c"><svg class="chk"><use href="#check"/></svg></div><div class="c"></div></div>
          <div class="row alt"><div class="c-name child"><svg class="i16 eye"><use href="#eye"/></svg><svg class="i16"><use href="#offcurve"/></svg><span class="t strong">偏置曲线 (14)</span></div><div class="c"><svg class="blk"><use href="#blockview"/></svg></div><div class="c"><svg class="chk"><use href="#check"/></svg></div><div class="c"></div></div>
          <div class="row"><div class="c-name"></div><div class="c"></div><div class="c"></div><div class="c"></div></div>
          <div class="row alt"><div class="c-name"></div><div class="c"></div><div class="c"></div><div class="c"></div></div>
          <div class="row"><div class="c-name"></div><div class="c"></div><div class="c"></div><div class="c"></div></div>
          <div class="row alt"><div class="c-name"></div><div class="c"></div><div class="c"></div><div class="c"></div></div>
          <div class="row"><div class="c-name"></div><div class="c"></div><div class="c"></div><div class="c"></div></div>
        </div>
        <div class="hscroll">
          <svg class="sb-arrow" viewBox="0 0 10 14"><path d="M8 2L3 7l5 5" fill="none" stroke="#555" stroke-width="2.200"/></svg>
          <div class="sb-thumb"></div>
          <svg class="sb-arrow sb-r" viewBox="0 0 10 14"><path d="M2 2l5 5-5 5" fill="none" stroke="#555" stroke-width="2.200"/></svg>
        </div>
      </div>
      <div class="split"></div>
      <div class="fold f1"><span>相关性</span><svg class="chev"><use href="#chev-d"/></svg></div>
      <div class="fold f2"><span>细节</span><svg class="chev"><use href="#chev-d"/></svg></div>
      <div class="fold f3"><span>预览</span><svg class="chev"><use href="#chev-d"/></svg></div>
    </aside>

    <aside class="side">
      <svg class="i24"><use href="#simp"/></svg>
      <svg class="i24"><use href="#s-x"/></svg>
      <svg class="i24"><use href="#s-win"/></svg>
      <svg class="i24"><use href="#s-wingear"/></svg>
      <svg class="i24"><use href="#s-cross"/></svg>
      <svg class="i24"><use href="#s-wrench"/></svg>
      <svg class="i24"><use href="#s-winrot"/></svg>
      <svg class="i24"><use href="#s-doc"/></svg>
      <svg class="i24"><use href="#s-orange"/></svg>
      <svg class="i24"><use href="#s-ruler"/></svg>
      <i class="side-sep"></i>
      <i class="caret-l"></i>
    </aside>

    <div class="stage">
      <div class="doc-tabs">
        <div class="doc-tab">
          <svg class="doc-ic" viewBox="0 0 14 14"><path d="M1 1h12v12H1z" fill="#fff" stroke="#cde"/><path d="M3 4h3v3H3z" fill="#e08a20"/><path d="M7 7h4v4H7z" fill="#3a8"/></svg>
          <span>A1.prt</span>
          <svg class="doc-b" viewBox="0 0 12 12"><path d="M2 3h6v7H2zM5 3V1h5v6H8" fill="none" stroke="#fff"/></svg>
          <svg class="doc-b" viewBox="0 0 12 12"><path d="M3 3l6 6M9 3l-6 6" stroke="#fff" stroke-width="1.800"/></svg>
        </div>
      </div>
      <div class="viewport">
        <svg class="scene" viewBox="371 266 1560 795" xmlns="http://www.w3.org/2000/svg">
          <path d="M455.300 549L1044 552.700 1080 688 828 686.700 632 685.300 641 727.300H598.600C540 722 495 700 485.600 664z" fill="#ffcc00" stroke="#5c4500" stroke-width=".8"/>
          <path d="M455.300 549L440 625 470 736.700 485.600 664z" fill="#b87500" stroke="#3f2c00" stroke-width=".8"/>
          <path d="M485.600 664C495 700 540 722 598.600 727.300L584.300 801.700C530 800 480 775 470 736.700z" fill="url(#gRound)" stroke="#3f2c00" stroke-width=".8"/>
          <path d="M598.600 727.300H641L638.800 748.300 1087.400 751 1076.300 805 584.300 801.700z" fill="#845000" stroke="#3f2c00" stroke-width=".8"/>
          <path d="M632 685.300L1080 688 1076.300 709.300 638.800 706.700z" fill="#845000" stroke="#3f2c00" stroke-width=".8"/>
          <path d="M638.800 706.700L1076.300 709.300 1087.400 751 638.800 748.300 641 727.300z" fill="#ffcc00" stroke="#5c4500" stroke-width=".8"/>
          <ellipse cx="492.300" cy="568.700" rx="15.500" ry="10" fill="url(#gHole)" stroke="#3f2c00"/>
          <ellipse cx="578" cy="569.300" rx="15.500" ry="10" fill="url(#gHole)" stroke="#3f2c00"/>
          <ellipse cx="663.300" cy="569.700" rx="15.500" ry="10" fill="url(#gHole)" stroke="#3f2c00"/>
          <path d="M452.600 539.700L1041.400 544M441.400 549L471.800 662.300" fill="none" stroke="#2fe03a" stroke-width="2"/>
          <path d="M440 625L487.900 802.700 1076.300 806" fill="none" stroke="#4c6ee8" stroke-width="1.800"/>
          <path d="M632 686L799.500 686.700 816.400 747.300 647.700 746.700z" fill="none" stroke="#4c6ee8" stroke-width="1.800"/>
          <path d="M818.700 595L834.300 654 812 767.300 795.900 708.300z" fill="#b5b000" stroke="#4a4500" stroke-width=".8"/>
          <g fill="none" stroke="#e9e2b6" stroke-width="1.100">
            <path d="M770.400 664.300H834M748 672.700H812L824 715H758zM737.900 640L748 668 757 620.700 768.200 663.300M748 668L758 715M768.200 663.300L759.300 708M758 715H873"/>
          </g>
          <path d="M772.700 640.700L776 622" stroke="#151560" stroke-width="1.300"/>
          <path d="M776.300 612L780 628 772.500 628z" fill="#000080"/>
          <path d="M873 712l13 3.500-13 3.500z" fill="#f2f2e8"/>
          <path d="M735 628l4 12-5 1z" fill="#eee"/>
          <circle cx="737.500" cy="640" r="3" fill="#999"/>
          <text class="ax ax-z" x="775" y="615">Z</text>
          <text class="ax ax-l" x="729" y="630">Y</text>
          <text class="ax ax-l" x="890" y="722">X</text>

          <path d="M433 962H458L463 972V992H438L433 982z" fill="#d8d8d8" stroke="#c4c4c4"/>
          <path d="M433 975H463M458 962V985L463 992M458 985H433" fill="none" stroke="#c4c4c4"/>
          <path d="M435 995H472" stroke="#cc3a3a" stroke-width="2.400"/>
          <path d="M467 991l11 4-11 4z" fill="#cc3a3a"/>
          <path d="M435 995L429 968" stroke="#3aa03a" stroke-width="2.400"/>
          <path d="M427 965l5 11-6 1z" fill="#3aa03a"/>
          <path d="M435 995L441 970" stroke="#1a44c8" stroke-width="3"/>
          <path d="M441 964l4 12-8-1z" fill="#1a44c8"/>
          <circle cx="435" cy="995" r="4" fill="url(#gBall)"/>
          <text class="tr tr-x" x="478" y="1000">X</text>
          <text class="tr tr-y" x="423" y="967">Y</text>
          <text class="tr tr-z" x="439" y="964">Z</text>
        </svg>
      </div>

      <div class="dialog">
        <div class="d-title">
          <svg class="d-gear"><use href="#gear"/></svg>
          <span class="d-name">命令查找器</span>
          <svg class="d-b" viewBox="0 0 14 14"><path d="M4 3a5 5 0 1 0 6 0" fill="none" stroke="#fff" stroke-width="2"/><path d="M3 0v5h4z" fill="#fff"/></svg>
          <span class="d-q">?</span>
          <svg class="d-b" viewBox="0 0 14 14"><path d="M1 1h12v12H1z" fill="none" stroke="#fff" stroke-width="1.300"/></svg>
          <svg class="d-b" viewBox="0 0 14 14"><path d="M2 2l10 10M12 2L2 12" stroke="#fff" stroke-width="1.800"/></svg>
        </div>
        <div class="d-body">
          <section class="sec sec-search">
            <div class="sec-head"><span>搜索</span><svg class="chev"><use href="#chev-u"/></svg></div>
            <div class="search-row">
              <div class="d-input"><span>简化</span><i class="caret"></i></div>
              <div class="d-find"><svg class="i18"><use href="#lens"/></svg></div>
            </div>
          </section>
          <section class="sec sec-res">
            <div class="sec-head"><span>有 14 条结果与“简化”匹配</span><svg class="chev"><use href="#chev-u"/></svg></div>
            <div class="res-box">
              <div class="res-list">
                <div class="res">
                  <div class="res-t"><svg class="res-ic"><use href="#d-remove"/></svg>移除参数</div>
                  <div class="res-l">从实体或片体移除所有参数，形成一个非关联的体。</div>
                  <div class="res-l">此命令在“船舶设计”应用模块中可用。</div>
                </div>
                <div class="res res-sel">
                  <div class="res-main">
                    <div class="res-t"><svg class="res-ic"><use href="#simp"/></svg>简化体</div>
                    <div class="res-l">通过体素或凸包替换现有几何体。</div>
                    <div class="res-l">菜单：工具 <span class="arr">-&gt;</span> Sinumerik 碰撞避让 <span class="arr">-&gt;</span> 简化体 （当前处于隐藏状</div>
                    <div class="res-l">态）</div>
                    <div class="res-l">主页 选项卡：简化体</div>
                  </div>
                  <div class="res-more"><i class="caret"></i></div>
                </div>
                <div class="res">
                  <div class="res-t"><svg class="res-ic"><use href="#d-curve"/></svg>简化曲线</div>
                  <div class="res-l">从曲线链创建一串最佳拟合直线和圆弧。</div>
                  <div class="res-l">菜单：插入 <span class="arr">-&gt;</span> 派生曲线 <span class="arr">-&gt;</span> 简化</div>
                  <div class="res-l">曲线 选项卡：更多 库 <span class="arr">-&gt;</span> 派生曲线 库 <span class="arr">-&gt;</span> 简化曲线</div>
                </div>
                <div class="res">
                  <div class="res-t"><span class="res-ic"></span>简化装配</div>
                  <div class="res-l">从装配创建单个密封实体，当除去内部细节时保留外部细节。</div>
                </div>
              </div>
              <div class="vscroll">
                <svg class="vs-a" viewBox="0 0 14 10"><path d="M2 8l5-5 5 5" fill="none" stroke="#555" stroke-width="2"/></svg>
                <div class="vs-thumb"></div>
                <svg class="vs-a vs-d" viewBox="0 0 14 10"><path d="M2 2l5 5 5-5" fill="none" stroke="#555" stroke-width="2"/></svg>
              </div>
            </div>
          </section>
          <section class="sec sec-set">
            <div class="sec-head"><span>设置</span><svg class="chev"><use href="#chev-d"/></svg></div>
          </section>
          <div class="d-foot"><div class="btn">关闭</div></div>
        </div>
      </div>
    </div>
  </main>

  <footer class="status">
    <span>单击机床导航器中的组件，按鼠标右键选择菜单选项。</span>
    <svg class="i16 st-ic"><use href="#focus"/></svg>
  </footer>
</div>
</body>
</html>
```

FILE: styles.css
```css
* { box-sizing: border-box; }
html, body { margin: 0; padding: 0; background: #000; }
body { font-family: "Open Sans", "Noto Sans CJK SC", sans-serif; font-size: 18px; color: #222; overflow: hidden; }
i { font-style: normal; display: block; }
svg { display: block; flex: none; overflow: visible; }
.sprite { width: 0; height: 0; overflow: hidden; }
.window { width: 1920px; height: 1078px; margin: 11px 0 0 11px; display: flex; flex-direction: column; background: #fff; overflow: hidden; }

.caret { width: 0; height: 0; border-left: 4px solid transparent; border-right: 4px solid transparent; border-top: 5px solid #222; flex: none; }
.caret-g { border-top-color: #aaa; }
.i16 { width: 16px; height: 16px; }
.i18 { width: 18px; height: 18px; }
.i20 { width: 20px; height: 20px; }
.i24 { width: 24px; height: 24px; }
.i36 { width: 34px; height: 36px; }

/* title bar */
.titlebar { height: 34px; flex: none; display: flex; align-items: center; }
.qat { width: 1057px; flex: none; display: flex; align-items: center; padding-left: 4px; }
.logo { font: bold 29px/34px "Liberation Sans", sans-serif; color: #7b8e9e; letter-spacing: -1px; width: 41px; }
.vsep { width: 1px; height: 26px; background: #ddd; margin: 0 5px; flex: none; }
.sp-logo { margin-right: 8px; }
.q16 { width: 16px; height: 18px; margin-right: 5px; }
.q-save { margin-right: 2px; }
.q-tight { margin-right: 7px; }
.q-end { margin-right: 0; }
.q-wide { margin-right: 10px; }
.sp-undo { margin-right: 4px; }
.sp-tag { margin: 0 7px 0 3px; }
.qtext { font-size: 17px; line-height: 24px; margin-right: 6px; white-space: nowrap; }
.qtext-end { margin-right: 0; }
.q10 { width: 9px; height: 9px; margin-left: 7px; }
.titlebar .caret { margin: 0 8px 0 2px; }
.titlebar .caret-n { margin: 0 3px 0 2px; }
.apptitle { font-size: 18.500px; line-height: 24px; margin-top: -2px; white-space: nowrap; width: 659px; flex: none; color: #111; }
.brand { font: bold 18.500px/34px "Open Sans", sans-serif; color: #009999; width: 116px; flex: none; letter-spacing: -.4px; }
.winbtns { display: flex; align-items: center; flex: none; }
.wb-min { width: 12px; height: 2px; background: #444; margin: 8px 20px 0 0; flex: none; }
.wb { width: 13px; height: 13px; margin-right: 21px; }

/* tabs */
.tabs { height: 39px; flex: none; display: flex; background: #dcdcdc; align-items: stretch; }
.tab-file { width: 107px; background: #559fba; color: #fff; font-size: 21px; line-height: 39px; text-align: center; margin-right: 5px; }
.tab { padding: 0 16px; font-size: 21px; line-height: 39px; color: #333; white-space: nowrap; }
.tab-on { background: #fff; color: #1a7596; padding: 0 16px; border-top: 1px solid #bbb; line-height: 37px; }
.tabs-right { margin-left: auto; display: flex; align-items: center; }
.cmdsearch { width: 184px; height: 28px; background: #fff; border: 1px solid #aaa; display: flex; align-items: center; justify-content: space-between; font-size: 18px; line-height: 26px; padding-right: 1px; color: #111; }
.tr-1 { margin-left: 11px; }
.tr-2 { margin-left: 9px; }
.tr-3 { margin-left: 10px; }
.dot { width: 14px; height: 14px; border-radius: 50%; background: #8a8a8a; margin: 0 7px 0 12px; }

/* ribbon */
.ribbon { height: 116px; flex: none; display: flex; background: #fff; padding: 4px 0; font-size: 17px; }
.group { display: flex; flex-direction: column; border-right: 1px solid #ddd; flex: none; }
.g1 { width: 154px; }
.g2 { width: 216px; }
.g3 { width: 281px; }
.g4 { width: 68px; }
.g-body { flex: 1; display: flex; min-height: 0; }
.g-label { height: 24px; flex: none; display: flex; align-items: center; color: #1b7a9c; line-height: 24px; margin-bottom: -4px; }
.g-label span { flex: 1; text-align: center; }
.g-label b { width: 22px; display: flex; justify-content: center; }
.smalls { display: flex; flex-direction: column; }
.s1 { width: 84px; padding-left: 13px; flex: none; }
.s2 { width: 100px; flex: none; margin-left: -1px; }
.small { height: 28.500px; display: flex; align-items: center; gap: 5px; white-space: nowrap; line-height: 24px; }
.big { display: flex; flex-direction: column; align-items: center; line-height: 24px; white-space: nowrap; flex: none; }
.big span { display: block; height: 22.500px; }
.w70 { width: 69px; }
.w84 { width: 84px; }
.w68 { width: 67px; }
.g2 .w70 { margin-left: 4px; }
.g3 .w84:first-child { margin-left: 14px; }
.big .i36 { margin-bottom: 1px; }
.more { width: 39px; flex: none; display: flex; flex-direction: column; align-items: center; line-height: 24px; }
.more-box { width: 38px; height: 35px; border: 1px solid #ddd; border-radius: 3px; display: flex; align-items: center; justify-content: center; margin-bottom: 2px; }
.more .caret { margin-top: 6px; }
.rib-end { margin-left: auto; display: flex; padding-right: 9px; align-self: flex-end; padding-bottom: 5px; }

/* toolbar */
.toolbar { height: 36px; flex: none; display: flex; align-items: center; border-top: 1px solid #ddd; border-bottom: 1px solid #8c8c8c; padding-left: 14px; font-size: 17px; }
.toolbar .rib-end { align-self: center; padding-bottom: 0; }
.menu-ic { width: 15px; height: 14px; margin-right: 8px; }
.menu-t { width: 65px; white-space: nowrap; line-height: 24px; margin-right: 3px; padding-top: 1px; }
.tsep { width: 1px; height: 26px; background: #ddd; flex: none; }
.sel { height: 28px; border: 1px solid #aaa; display: flex; align-items: center; justify-content: space-between; padding: 1px 7px 0 1px; line-height: 26px; flex: none; color: #111; }
.sel .caret { border-left-width: 5px; border-right-width: 5px; border-top-width: 6px; }
.sel-a { width: 202px; margin-right: 8px; }
.sel-b { width: 213px; margin-right: 7px; }
.ti-sel { width: 30px; height: 32px; background: #bcdde8; border: 1px solid #a8d0de; display: flex; align-items: center; justify-content: center; margin-right: 6px; flex: none; }
.ti { width: 24px; height: 24px; flex: none; }
.mr3 { margin-right: 3px; }
.mr6 { margin-right: 6px; }
.mr8 { margin-right: 8px; }
.mr9 { margin-right: 9px; }
.mr10 { margin-right: 10px; }
.mr11 { margin-right: 11px; }
.mr12 { margin-right: 12px; }
.mr13 { margin-right: 13px; }

/* main */
.main { flex: 1; min-height: 0; display: flex; }
.rail { width: 32px; flex: none; background: #e8e8e8; border-right: 1px solid #aaa; display: flex; flex-direction: column; align-items: center; position: relative; z-index: 1; }
.rail-i { height: 32px; width: 100%; display: flex; align-items: center; justify-content: center; flex: none; }
.ri-gear { height: 26px; }
.m2 { margin-top: 2px; }
.m10 { margin-top: 10px; }
.m11 { margin-top: 11px; }
.m12 { margin-top: 12px; }
.m20 { margin-top: 20px; }
.m21 { margin-top: 21px; }
.m24 { margin-top: 24px; }
.rail-on { height: 44px; margin-top: 3px; background: #fff; border: 1px solid #bbb; border-right: 1px solid #fff; margin-left: 3px; width: 30px; }

/* navigator */
.nav { width: 293px; flex: none; background: #fff; border-right: 1px solid #aaa; padding: 0 9px 0 6px; display: flex; flex-direction: column; }
.nav-head { height: 34px; flex: none; display: flex; align-items: center; justify-content: space-between; padding: 3px 8px 0 4px; line-height: 24px; }
.grid { height: 685px; flex: none; border: 1px solid #ccc; padding: 0 1px; display: flex; flex-direction: column; }
.g-head { height: 29px; flex: none; display: flex; background: #f3f3f3; border-bottom: 1px solid #ddd; font-size: 18px; line-height: 26px; }
.g-head .c-name { padding-left: 6px; }
.g-head .c { overflow: hidden; justify-content: flex-start; padding-left: 3px; }
.clip { display: block; width: 13px; overflow: hidden; text-indent: -3px; margin-left: 4px; white-space: nowrap; }
.sort { display: inline-block; width: 0; height: 0; border-left: 7px solid transparent; border-right: 7px solid transparent; border-bottom: 7px solid #222; margin: 0 0 3px 19px; }
.g-rows { height: 626px; flex: none; overflow: hidden; }
.row { height: 28px; display: flex; border-bottom: 1px solid #eee; }
.alt { background: #f8f8f8; }
.c-name { width: 199px; flex: none; display: flex; align-items: center; white-space: nowrap; line-height: 26px; overflow: hidden; position: relative; }
.c { width: 24px; flex: none; border-left: 1px solid #e4e4e4; display: flex; align-items: center; justify-content: center; }
.c-last { width: 26px; }
.top { padding-left: 4px; gap: 3px; }
.box { width: 12px; height: 12px; font-size: 20px; font-weight: 300; line-height: 11px; text-align: center; margin-right: 1px; color: #333; }
.dotdown::after { content: ""; position: absolute; left: 9px; top: 21px; height: 15px; border-left: 1px dotted #999; }
.top .nar { width: 14px; height: 14px; margin-right: 3px; }
.chk { width: 15px; height: 13px; }
.blk { width: 9px; height: 13px; }
.child { padding-left: 37px; }
.child::before { content: ""; position: absolute; left: 28px; top: -1px; bottom: 13px; width: 9px; border-left: 1px dotted #999; border-bottom: 1px dotted #999; }
.child .i16 { margin-right: 1px; }
.child .eye { width: 17px; height: 17px; margin-right: 1px; }
.child .t { margin-left: 1px; }
.stack { position: relative; display: block; width: 18px; height: 17px; flex: none; }
.badge { position: absolute; left: 0; top: -3px; width: 12px; height: 12px; }
.strong { font-weight: 700; }
.hscroll { height: 24px; flex: none; margin: 1px 0 0; background: #f0f0f0; display: flex; align-items: center; }
.sb-arrow { width: 26px; height: 13px; }
.sb-thumb { width: 173px; height: 24px; background: #c8c8c8; }
.sb-r { width: 10px; margin-left: 56px; }
.split { height: 5px; flex: none; background: #e0e0e0; border: 1px solid #aaa; margin-top: -1px; }
.fold { flex: none; display: flex; align-items: flex-end; justify-content: space-between; border-bottom: 2px solid #ccc; color: #1c7a99; font-size: 22px; line-height: 30px; padding: 0 6px 0 7px; }
.fold .chev { margin-bottom: 9px; }
.f1 { height: 32px; }
.f2 { height: 33px; }
.f3 { height: 32px; }
.chev { width: 19px; height: 15px; }

/* side icons */
.side { width: 35px; flex: none; background: #fff; padding-top: 13px; display: flex; flex-direction: column; align-items: center; gap: 8px; }
.side-sep { width: 27px; height: 1px; background: #ddd; margin-top: 1px; }
.caret-l { width: 0; height: 0; border-top: 4px solid transparent; border-bottom: 4px solid transparent; border-right: 5px solid #222; margin: auto 0 8px -10px; }

/* canvas */
.stage { flex: 1; min-width: 0; display: flex; flex-direction: column; position: relative; }
.doc-tabs { height: 30px; flex: none; background: #fff; border-bottom: 2px solid #559fba; }
.doc-tab { width: 119px; height: 28px; background: #559fba; color: #fff; display: flex; align-items: center; padding-left: 9px; line-height: 26px; }
.doc-ic { width: 13px; height: 13px; margin-right: 4px; }
.doc-tab span { width: 62px; }
.doc-b { width: 12px; height: 12px; margin-right: 4px; }
.viewport { flex: 1; min-height: 0; background: linear-gradient(#b5b5b5, #eaeaeb 95%); position: relative; }
.scene { position: absolute; left: 0; top: 0; width: 100%; height: 100%; }
.ax { font: 14px "Open Sans", sans-serif; }
.ax-z { fill: #00007c; font-size: 15px; }
.ax-l { fill: #e5e0c0; font-size: 14px; }
.tr { font: 13px "Liberation Sans", sans-serif; }
.tr-x { fill: #cc3a3a; }
.tr-y { fill: #3aa03a; }
.tr-z { fill: #1a44c8; font-size: 15px; }

/* dialog */
.dialog { position: absolute; left: 900px; top: 2px; width: 660px; height: 658px; background: #efefef; border: 1px solid #aaa; border-top: 0; display: flex; flex-direction: column; z-index: 2; }
.d-title { height: 38px; flex: none; background: #559fba; color: #fff; display: flex; align-items: center; padding-left: 9px; }
.d-gear { width: 15px; height: 15px; color: #fff; margin-right: 10px; }
.d-name { width: 505px; font-size: 18px; line-height: 26px; }
.d-b { width: 13px; height: 13px; margin-right: 18px; }
.d-q { width: 13px; margin-right: 18px; font: bold 18px/20px "Open Sans", sans-serif; text-align: center; }
.d-b:last-child { margin-right: 0; }
.d-body { flex: 1; padding: 0 6px; display: flex; flex-direction: column; }
.sec { background: #fff; box-shadow: 0 2px 1px #c9c9c9; flex: none; padding: 0 9px; }
.sec-head { height: 38px; display: flex; align-items: center; justify-content: space-between; color: #1c7a99; font-size: 22px; line-height: 30px; margin: 0 -2px 0 -3px; padding-bottom: 4px; }
.sec-search { height: 78px; }
.search-row { display: flex; gap: 3px; align-items: flex-start; }
.d-input { width: 602px; height: 32px; border: 1px solid #aaa; display: flex; align-items: center; justify-content: space-between; padding: 0 9px 0 3px; line-height: 26px; }
.d-input .caret { border-left-width: 5px; border-right-width: 5px; border-top-width: 6px; }
.d-find { width: 23px; height: 23px; border: 1px solid #bbb; display: flex; align-items: center; justify-content: center; flex: none; }
.sec-res { height: 446px; margin-top: 4px; }
.res-box { height: 399px; border: 1px solid #ddd; display: flex; }
.res-list { width: 601px; flex: none; overflow: hidden; padding-top: 10px; }
.res { padding-left: 36px; margin-bottom: 12px; white-space: nowrap; }
.res:first-child .res-t { margin-bottom: 5px; }
.res-t { display: flex; align-items: center; font-weight: 700; line-height: 24px; height: 24px; margin: 0 0 6px -28px; gap: 3px; }
.res-ic { width: 25px; height: 26px; flex: none; }
.res-l { height: 24px; line-height: 24px; }
.arr { letter-spacing: 1.500px; margin: 0 1.500px; }
.res-sel { margin: -3px 9px 10px 7px; padding: 0 0 0 1px; height: 129px; border: 1px solid #5b9fd0; border-radius: 6px; background: #f3f9fc; display: flex; overflow: hidden; }
.res-main { flex: 1; padding: 2px 0 0 27px; }
.res-sel .res-t { margin-bottom: 5px; margin-left: -26px; gap: 2px; }
.res-more { width: 24px; flex: none; background: #b9d9e6; border-left: 1px solid #88bbcc; display: flex; align-items: center; justify-content: center; }
.vscroll { flex: 1; display: flex; flex-direction: column; align-items: center; background: #f6f6f6; margin-right: 2px; padding-right: 1px; }
.vs-a { width: 14px; height: 10px; margin-top: 10px; }
.vs-thumb { width: 100%; height: 98px; background: #c8c8c8; margin-top: 7px; }
.vs-d { margin-top: auto; margin-bottom: 8px; }
.sec-set { height: 31px; margin-top: 4px; }
.sec-set .sec-head { height: 31px; padding-bottom: 0; }
.d-foot { flex: 1; display: flex; justify-content: flex-end; padding: 12px 10px 0 0; }
.btn { width: 66px; height: 32px; background: #e1e1e1; border: 1px solid #aaa; text-align: center; line-height: 30px; font-size: 18px; }

/* status */
.status { height: 28px; flex: none; background: #fff; display: flex; align-items: center; justify-content: space-between; padding: 0 55px 0 3px; font-weight: 700; font-size: 16.700px; color: #222; line-height: 26px; }
.st-ic { width: 15px; height: 15px; }
```
